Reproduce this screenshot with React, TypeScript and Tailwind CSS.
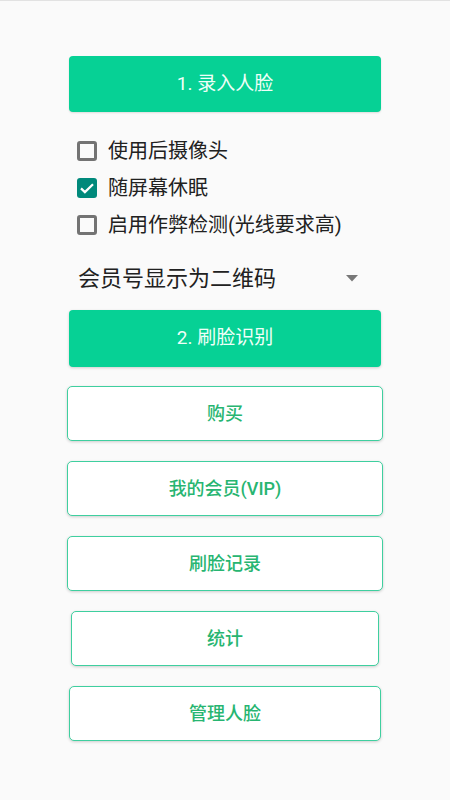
import React from "react";

const font = { fontFamily: 'Roboto, "Noto Sans CJK SC", sans-serif' };

function Check({ checked, label }: { checked?: boolean; label: string }) {
  return (
    <div className="flex items-center h-[37px] ml-[77px]">
      {checked ? (
        <div className="w-[20px] h-[20px] rounded-[3px] bg-[#00897b] flex items-center justify-center">
          <svg width="18" height="18" viewBox="0 0 24 24">
            <path d="M4 12.5l5.2 5L20 7" fill="none" stroke="#fff" strokeWidth="3" />
          </svg>
        </div>
      ) : (
        <div className="w-[20px] h-[20px] rounded-[3px] border-[3px] border-[#737373]" />
      )}
      <span className="ml-[11px] text-[20px] text-[#212121] leading-none">{label}</span>
    </div>
  );
}

function Outline({ label, cls }: { label: string; cls: string }) {
  return (
    <button
      className={
        "h-[55px] bg-white border-[1.5px] border-[#3fcf9f] rounded-[5px] shadow-[0_1px_3px_rgba(0,0,0,0.18)] text-[#27b571] text-[18px] font-medium " +
        cls
      }
    >
      {label}
    </button>
  );
}

export default function App() {
  return (
    <div className="w-[450px] h-[800px] bg-[#fafafa] border-t border-[#e2e2e2] flex flex-col" style={font}>
      <button className="mt-[55px] mx-[69px] h-[56px] rounded-[4px] bg-[#06d195] text-[#effff8] text-[19px] font-normal shadow-[0_1px_2px_rgba(0,0,0,0.12)]">
        1. 录入人脸
      </button>

      <div className="mt-[20px] flex flex-col">
        <Check label="使用后摄像头" />
        <Check checked label="随屏幕休眠" />
        <Check label="启用作弊检测(光线要求高)" />
      </div>

      <div className="mt-[11px] h-[48px] flex items-center justify-between ml-[78px] mr-[92px]">
        <span className="text-[22px] text-[#212121]">会员号显示为二维码</span>
        <svg width="12" height="7" viewBox="0 0 12 7">
          <path d="M0 0h12L6 6.5z" fill="#777" />
        </svg>
      </div>

      <button className="mt-[8px] mx-[69px] h-[57px] rounded-[4px] bg-[#06d195] text-[#effff8] text-[19px] font-normal shadow-[0_1px_3px_rgba(0,0,0,0.18)]">
        2. 刷脸识别
      </button>

      <div className="mt-[19px] flex flex-col gap-[20px]">
        <Outline label="购买" cls="mx-[67px]" />
        <Outline label="我的会员(VIP)" cls="mx-[67px]" />
        <Outline label="刷脸记录" cls="mx-[67px]" />
        <Outline label="统计" cls="mx-[71px]" />
        <Outline label="管理人脸" cls="mx-[69px]" />
      </div>
    </div>
  );
}
